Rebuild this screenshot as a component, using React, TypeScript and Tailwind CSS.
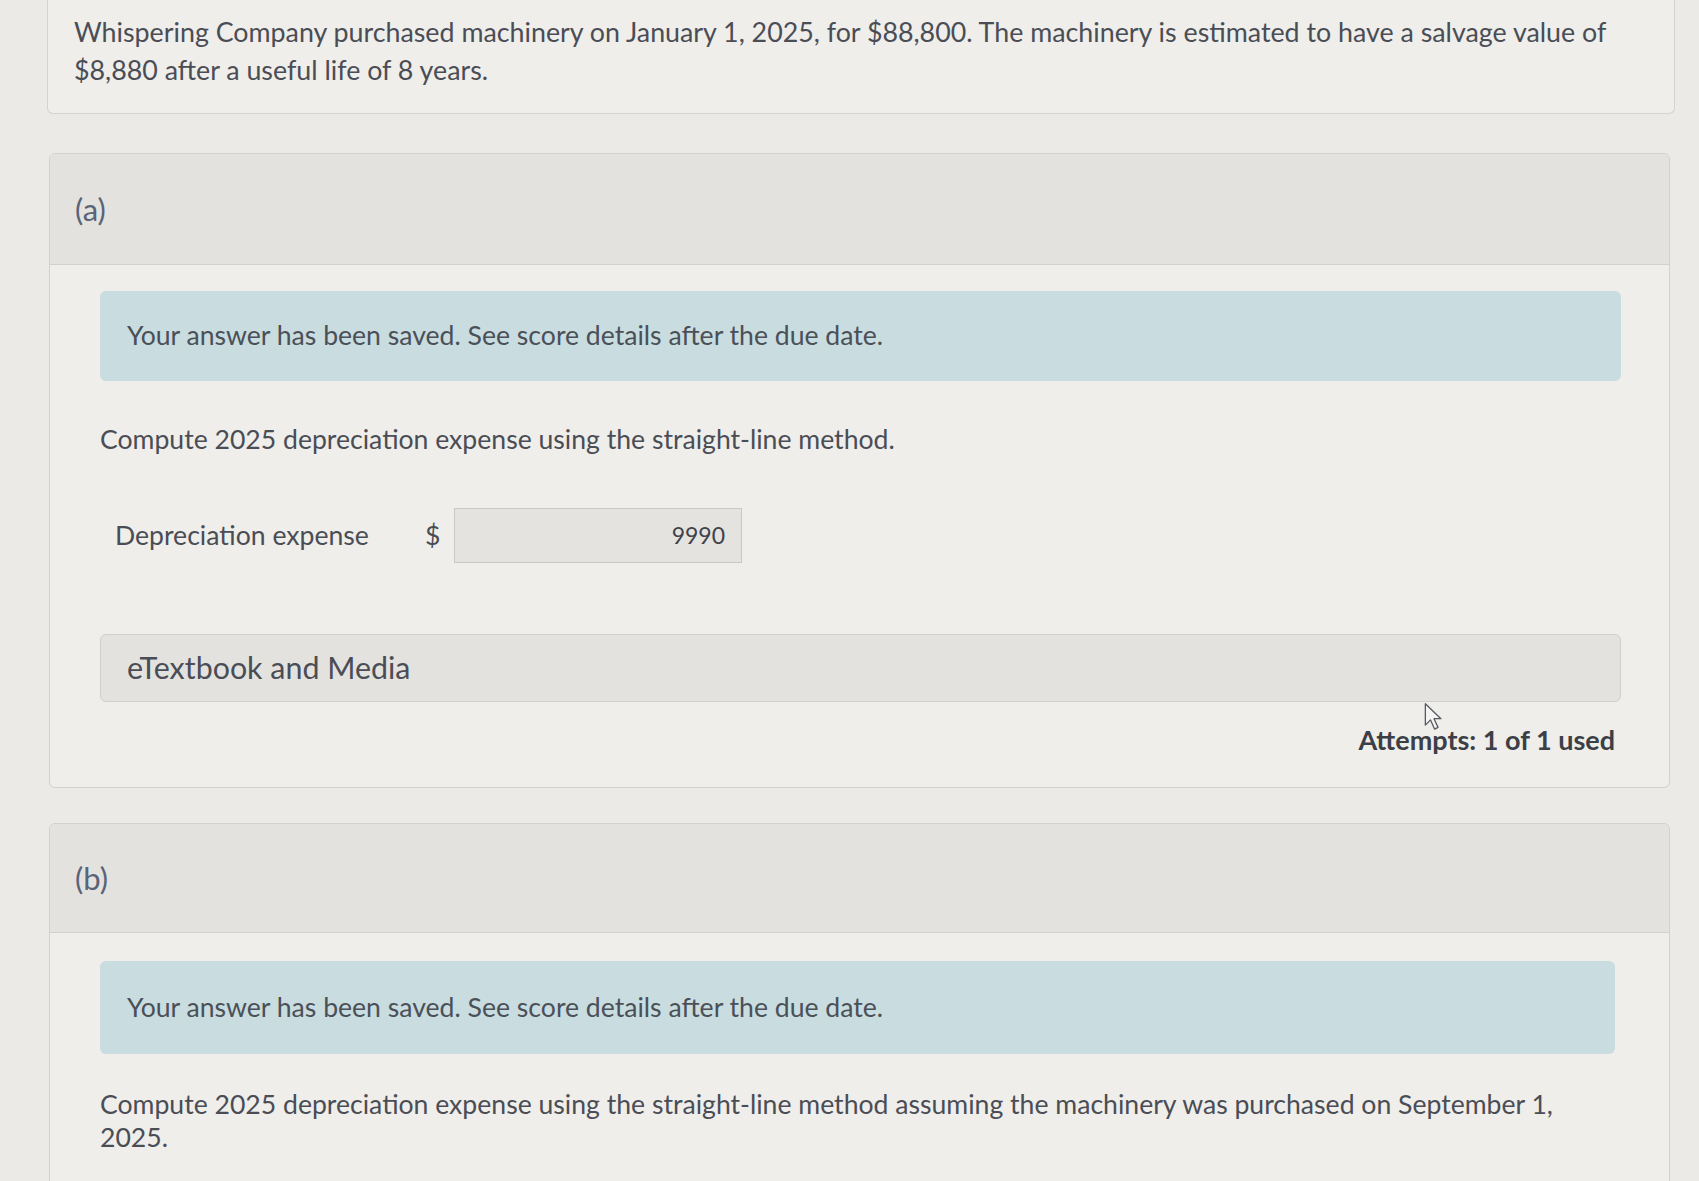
import React from 'react';

const font = { fontFamily: 'Lato, "Open Sans", sans-serif' };

function SavedBanner({ className }: { className: string }) {
  return (
    <div className={`flex items-center rounded-md bg-[#c9dcdf] pl-[27px] text-[26.6px] text-[#4b5058] ${className}`}>
      Your answer has been saved. See score details after the due date.
    </div>
  );
}

function PartHeader({ label, h }: { label: string; h: string }) {
  return (
    <div className={`flex items-center border-b border-[#d2d1cd] bg-[#e3e2de] pl-[25px] ${h}`}>
      <span className="text-[31px] text-[#5a6377]">{label}</span>
    </div>
  );
}

export default function App() {
  return (
    <div className="min-h-[1181px] bg-[#ebeae6] text-[#4a4d55]" style={font}>
      <div className="pl-[47px] pr-[24px]">
        {/* problem statement */}
        <div className="rounded-b-md border-x border-b border-[#d4d3cf] bg-[#efeeea] px-[26px] pt-[13px] pb-[24px] text-[26.8px] leading-[38px]">
          Whispering Company purchased machinery on January 1, 2025, for $88,800. The machinery is estimated to have a salvage value of $8,880 after a useful life of 8 years.
        </div>

        {/* part a */}
        <div className="ml-[2px] mr-[5px] mt-[39px] overflow-hidden rounded-md border border-[#d2d1cd] bg-[#efeeea]">
          <PartHeader label="(a)" h="h-[111px]" />
          <div className="relative pl-[50px] pr-[48px] pt-[26px] pb-[31px]">
            <SavedBanner className="h-[90px]" />
            <p className="mt-[40px] text-[26.6px] leading-[36px]">
              Compute 2025 depreciation expense using the straight-line method.
            </p>
            <div className="mt-[51px] flex items-center">
              <span className="w-[325px] pl-[15px] text-[26.6px]">Depreciation expense</span>
              <span className="w-[29px] text-[26.6px]">$</span>
              <div className="flex h-[55px] w-[288px] items-center justify-end border border-[#c9c8c4] bg-[#e4e3e0] pr-[16px] text-[23px] text-[#3f4249]">
                9990
              </div>
            </div>
            <div className="mt-[71px] flex h-[68px] items-center rounded-md border border-[#d0cfcb] bg-[#e3e2df] pl-[26px] text-[30.4px]">
              eTextbook and Media
            </div>
            <div className="mt-[22px] pr-[6px] text-right text-[27px] font-bold leading-[32px] text-[#3c3f46]">
              Attempts: 1 of 1 used
            </div>
            <svg className="absolute left-[1373px] top-[437px]" width="22" height="30" viewBox="0 0 18 26">
              <path d="M1.5 1.5 L1.5 20 L6 15.5 L9.5 23.5 L12.5 22 L9 14.5 L15 14.5 Z" fill="#f4f4f2" stroke="#55585e" strokeWidth="1.1" strokeLinejoin="round" />
            </svg>
          </div>
        </div>

        {/* part b */}
        <div className="ml-[2px] mr-[5px] mt-[35px] overflow-hidden rounded-t-md border border-b-0 border-[#d2d1cd] bg-[#efeeea]">
          <PartHeader label="(b)" h="h-[109px]" />
          <div className="pl-[50px] pr-[54px] pt-[28px] pb-[40px]">
            <SavedBanner className="h-[93px]" />
            <p className="mt-[34px] max-w-[1490px] text-[26.6px] leading-[33px]">
              Compute 2025 depreciation expense using the straight-line method assuming the machinery was purchased on September 1, 2025.
            </p>
          </div>
        </div>
      </div>
    </div>
  );
}
